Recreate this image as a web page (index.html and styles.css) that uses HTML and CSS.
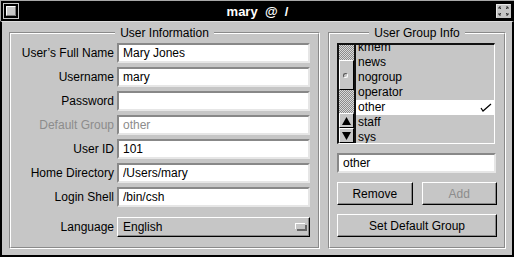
FILE: index.html
```html
<!doctype html>
<html lang="en">
  <head>
    <meta charset="utf-8">
    <title>mary @ /</title>
    <link rel="stylesheet" href="styles.css">
  </head>
  <body>
    <div class="window">

      <header class="titlebar">
        <span class="title-btn">
          <svg width="16" height="16" viewBox="0 0 16 16">
            <rect x="0.5" y="0.5" width="15" height="15" fill="#000" stroke="#c6c6c6"/>
            <rect x="3" y="3" width="10" height="10" fill="#c6c6c6"/>
            <path d="M3.5 12.5 V3.5 H12.5" fill="none" stroke="#fff"/>
            <path d="M3.5 12.5 H12.5 V3.5" fill="none" stroke="#7a7a7a"/>
          </svg>
        </span>
        <span class="title">mary  @  /</span>
        <span class="title-btn">
          <svg width="15" height="14" viewBox="0 0 15 14">
            <rect x="0" y="0" width="15" height="14" fill="#c6c6c6"/>
            <path d="M0.5 13.5 V0.5 H14.5" fill="none" stroke="#e8e8e8"/>
            <path d="M3 3 L5 5 M3 3 H5 M3 3 V5 M12 3 L10 5 M12 3 H10 M12 3 V5 M3 11 L5 9 M3 11 H5 M3 11 V9 M12 11 L10 9 M12 11 H10 M12 11 V9" fill="none" stroke="#333" stroke-width="1"/>
          </svg>
        </span>
      </header>

      <main class="content">

        <section class="frame user-info">
          <span class="legend">User Information</span>
          <div class="frame-in">
            <div class="form">
              <label>User’s Full Name</label>
              <input class="field" type="text" value="Mary Jones">
              <label>Username</label>
              <input class="field" type="text" value="mary">
              <label>Password</label>
              <input class="field" type="text" value="">
              <label class="dim">Default Group</label>
              <input class="field dim" type="text" value="other">
              <label>User ID</label>
              <input class="field" type="text" value="101">
              <label>Home Directory</label>
              <input class="field" type="text" value="/Users/mary">
              <label>Login Shell</label>
              <input class="field" type="text" value="/bin/csh">
              <label class="spaced">Language</label>
              <button class="option spaced" type="button">
                <span>English</span>
                <span class="option-mark"></span>
              </button>
            </div>
          </div>
        </section>

        <section class="frame group-info">
          <span class="legend">User Group Info</span>
          <div class="frame-in">

            <div class="list">
              <div class="scroll">
                <div class="thumb"><span class="knob"></span></div>
                <div class="arrows">
                  <span class="arrow">
                    <svg width="9" height="8" viewBox="0 0 9 8"><polygon points="4.5,0 9,8 0,8" fill="#000"/></svg>
                  </span>
                  <span class="arrow">
                    <svg width="9" height="8" viewBox="0 0 9 8"><polygon points="0,0 9,0 4.5,8" fill="#000"/></svg>
                  </span>
                </div>
              </div>
              <div class="items">
                <ul>
                  <li>kmem</li>
                  <li>news</li>
                  <li>nogroup</li>
                  <li>operator</li>
                  <li class="sel">other
                    <svg class="check" width="12" height="9" viewBox="0 0 12 9">
                      <path d="M1 5 L3 8 L11 1" fill="none" stroke="#000" stroke-width="1.2"/>
                    </svg>
                  </li>
                  <li>staff</li>
                  <li>sys</li>
                </ul>
              </div>
            </div>

            <input class="field group-field" type="text" value="other">

            <div class="btn-row">
              <button class="btn" type="button">Remove</button>
              <button class="btn dim" type="button">Add</button>
            </div>

            <button class="btn wide" type="button">Set Default Group</button>

          </div>
        </section>

      </main>
    </div>
  </body>
</html>
```

FILE: styles.css
```css
* {
  margin: 0;
  padding: 0;
  box-sizing: border-box;
}

body {
  font-family: "Liberation Sans", Arial, sans-serif;
  font-size: 12px;
  color: #000;
  background: #c6c6c6;
}

input, button {
  font: inherit;
  color: inherit;
  -webkit-appearance: none;
  outline: none;
}

.window {
  width: 514px;
  height: 257px;
  display: flex;
  flex-direction: column;
}

/* title bar */
.titlebar {
  height: 21px;
  flex: none;
  background: #000;
  border-top: 1px solid #a8a8a8;
  border-left: 1px solid #a8a8a8;
  display: flex;
  align-items: center;
  justify-content: space-between;
  padding: 0 3px 0 2px;
}

.title-btn {
  display: flex;
}

.title {
  color: #fff;
  font-weight: bold;
  font-size: 13px;
  white-space: pre;
}

/* window body */
.content {
  flex: 1;
  display: flex;
  gap: 8px;
  padding: 10px 6px 6px 7px;
  border: 2px solid #000;
  border-top: 1px solid #dedede;
}

.frame {
  position: relative;
  border: 1px solid;
  border-color: #8a8a8a #fff #fff #8a8a8a;
}

.frame-in {
  height: 100%;
  border: 1px solid;
  border-color: #fff #8a8a8a #8a8a8a #fff;
}

.user-info {
  width: 311px;
}

.group-info {
  width: 178px;
}

.legend {
  position: absolute;
  top: -7px;
  left: 0;
  right: 0;
  width: max-content;
  margin: 0 auto;
  padding: 0 5px;
  line-height: 14px;
  background: #c6c6c6;
  white-space: nowrap;
}

.dim {
  color: #8c8c8c;
}

/* user information form */
.form {
  display: grid;
  grid-template-columns: 1fr 193px;
  column-gap: 3px;
  row-gap: 4px;
  align-items: center;
  padding: 9px 8px 0 0;
}

.form label {
  text-align: right;
  white-space: nowrap;
}

.spaced {
  margin-top: 6px;
}

.field {
  width: 100%;
  height: 20px;
  padding: 0 4px;
  background: #fff;
  border: 2px solid;
  border-color: #888 #e6e6e6 #e6e6e6 #888;
}

.field.dim {
  color: #8c8c8c;
}

.option {
  height: 20px;
  display: flex;
  align-items: center;
  justify-content: space-between;
  padding: 0 4px 0 5px;
  background: #c6c6c6;
  border: 1px solid;
  border-color: #fff #000 #000 #fff;
  box-shadow: inset -1px -1px 0 #888;
}

.option-mark {
  width: 10px;
  height: 6px;
  margin-bottom: 2px;
  background: #c6c6c6;
  border-top: 1px solid #fff;
  border-left: 1px solid #fff;
  box-shadow: 2px 2px 0 #666;
}

/* group info */
.group-info .frame-in {
  display: flex;
  flex-direction: column;
  align-items: flex-start;
  gap: 9px;
  padding: 9px 0 0 7px;
}

.list {
  width: 158px;
  height: 101px;
  display: flex;
  border-style: solid;
  border-width: 2px 1px 1px 2px;
  border-color: #111 #fff #fff #111;
}

.scroll {
  width: 17px;
  flex: none;
  display: flex;
  flex-direction: column;
  background: repeating-conic-gradient(#8c8c8c 0 25%, #dadada 0 50%) 0 0 / 2px 2px;
  border-right: 2px solid #111;
}

.thumb {
  margin-top: 15px;
  height: 30px;
  display: flex;
  align-items: center;
  padding-left: 3px;
  background: #c6c6c6;
  border: 1px solid;
  border-color: #fff #000 #000 #fff;
}

.knob {
  width: 5px;
  height: 5px;
  border-radius: 50%;
  border: 1px solid;
  border-color: #555 #fff #fff #555;
}

.arrows {
  margin-top: auto;
  display: flex;
  flex-direction: column;
}

.arrow {
  height: 15px;
  display: flex;
  align-items: center;
  justify-content: center;
  background: #c6c6c6;
  border: 1px solid;
  border-color: #fff #000 #000 #fff;
}

.items {
  flex: 1;
  overflow: hidden;
}

.items ul {
  list-style: none;
  margin-top: -5px;
}

.items li {
  height: 15px;
  line-height: 15px;
  padding: 0 2px 0 2px;
  display: flex;
  align-items: center;
  justify-content: space-between;
}

.items li.sel {
  background: #fff;
}

.group-field {
  width: 159px;
}

.btn-row {
  width: 160px;
  display: grid;
  grid-template-columns: 1fr 1fr;
  gap: 9px;
}

.btn {
  height: 23px;
  background: #c6c6c6;
  border: 1px solid;
  border-color: #fff #000 #000 #fff;
  box-shadow: inset -1px -1px 0 #888;
}

.wide {
  width: 160px;
}
```
